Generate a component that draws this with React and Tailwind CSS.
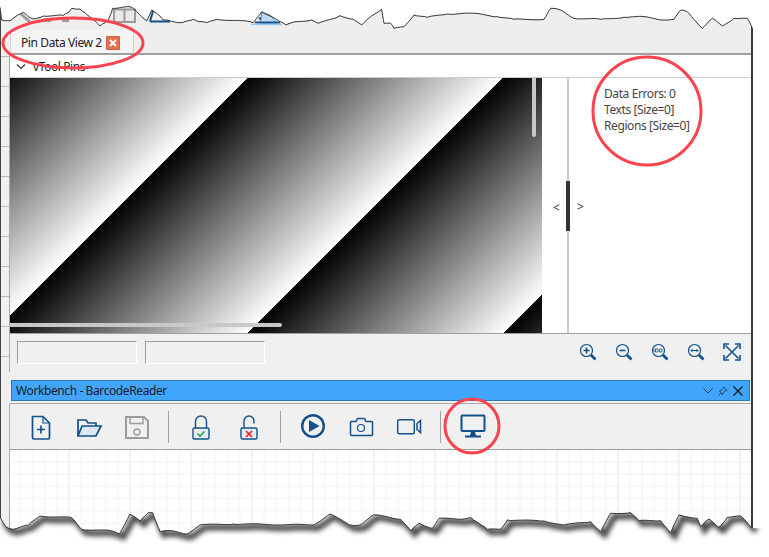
import React from 'react'

const BLUE = '#11508a'

// torn paper edges, traced from the 3x crops
const scale = (pts, dx, dy) => pts.map(([x, y]) => [x / 3 + dx, y / 3 + dy])

const TOP_EDGE = [
  ...scale([[0, 22], [5, 60], [30, 62], [60, 42], [70, 37], [85, 50], [100, 57], [130, 48], [190, 46], [205, 38], [215, 25], [240, 27], [255, 38], [275, 55], [300, 78], [315, 68], [325, 60], [338, 25], [390, 20], [405, 30], [425, 50], [440, 62], [455, 30], [470, 40], [490, 60], [540, 68]], 0, 0),
  ...scale([[20, 63], [40, 58], [55, 65], [80, 68], [110, 58], [185, 62], [220, 68], [245, 35], [275, 50], [300, 65], [318, 75], [345, 65], [395, 60], [415, 70], [465, 55], [480, 47], [520, 58], [545, 75], [575, 48], [605, 28], [612, 70]], 180, 0),
  ...scale([[20, 70], [30, 85], [60, 80], [90, 45], [130, 52], [190, 42], [240, 40], [290, 42], [340, 50], [390, 58], [480, 58], [500, 25], [530, 30], [570, 55], [650, 58], [720, 52], [780, 50], [840, 60], [870, 58], [890, 30], [910, 35], [955, 85], [985, 55], [1015, 78], [1050, 55], [1090, 55], [1105, 85]], 384, 0),
]

const BOTTOM_EDGE = [
  ...scale([[0, 232], [20, 262], [40, 268], [85, 255], [120, 228], [215, 233], [245, 268], [330, 272], [358, 282], [390, 222], [420, 243], [445, 218], [458, 218], [480, 275], [510, 272], [560, 282], [600, 255], [700, 252], [940, 255], [990, 222], [1050, 255], [1080, 255], [1120, 225], [1152, 228]], 0, 440),
  ...scale([[50, 238], [80, 272], [105, 250], [145, 265], [165, 235], [230, 238], [260, 232], [310, 268], [350, 268], [370, 240], [480, 243], [540, 255], [620, 245], [650, 275], [680, 220], [740, 218], [765, 242], [830, 242], [860, 278], [885, 225], [940, 235], [950, 260], [975, 237], [1005, 262], [1030, 232], [1070, 228], [1105, 265]], 384, 440),
]

// little wobble so the edge looks torn, not straight segments
const roughen = (pts) => {
  const out = []
  pts.forEach(([x, y], i) => {
    if (i === 0) return out.push([x, y])
    const [px, py] = pts[i - 1]
    const steps = Math.max(1, Math.round(Math.hypot(x - px, y - py) / 3))
    for (let s = 1; s <= steps; s++) {
      const t = s / steps
      const n = s === steps ? 0 : Math.sin(out.length * 12.9898) * 0.5
      out.push([px + (x - px) * t, py + (y - py) * t + n])
    }
  })
  return out
}

const toStr = (pts) => pts.map(([x, y]) => `${x.toFixed(1)},${y.toFixed(1)}`).join(' ')

const topPts = roughen(TOP_EDGE)
const bottomPts = roughen(BOTTOM_EDGE)

const TornEdges = () => (
  <svg className="absolute inset-0 pointer-events-none" width="769" height="557">
    <defs>
      <filter id="blur" x="-5%" y="-50%" width="110%" height="200%">
        <feGaussianBlur stdDeviation="2.6" />
      </filter>
      <clipPath id="below">
        <polygon points={`${toStr(bottomPts)} 769,528 769,557 0,557`} />
      </clipPath>
    </defs>
    {/* right hand shadow */}
    <line x1="755" y1="34" x2="755" y2="526" stroke="#000" strokeOpacity="0.7" strokeWidth="6" filter="url(#blur)" />
    {/* top */}
    <polygon points={`0,0 769,0 769,30 ${toStr([...topPts].reverse())}`} fill="#fff" />
    {/* toolbar leftovers poking through the tear */}
    <g fill="none">
      <path d="M21 14l9 8" stroke="#9a9a9a" strokeWidth="3" />
      <path d="M44 21h7M62 21h7M67.500 17v5" stroke="#9a9a9a" strokeWidth="2" />
      <path d="M114 22V9.500h21V22zM124.500 9.500V22" stroke="#9a9a9a" strokeWidth="2" fill="#e8e8e8" />
      <path d="M150 21.500h20M150 21.500L153 11" stroke={BLUE} strokeWidth="2" />
      <path d="M260 23l2-11 8 3 7 8z" fill="#bcd7ee" stroke={BLUE} strokeWidth="0.6" />
      <circle cx="260" cy="18.500" r="1.300" fill={BLUE} />
      <path d="M255 22.500h25" stroke={BLUE} strokeWidth="2" />
      <path d="M251 24.500h31" stroke="#9cc8ee" strokeWidth="1.500" />
    </g>
    <polyline points={toStr(topPts)} fill="none" stroke="#333" strokeWidth="1" />
    {/* bottom */}
    <polygon points={`${toStr(bottomPts)} 769,528 769,557 0,557`} fill="#fff" />
    <g clipPath="url(#below)">
      <polyline points={toStr(bottomPts)} transform="translate(4 3)" fill="none" stroke="#000" strokeOpacity="0.75" strokeWidth="6" filter="url(#blur)" />
    </g>
    <polyline points={toStr(bottomPts)} fill="none" stroke="#333" strokeWidth="1" />
    {/* red callouts */}
    <g fill="none" stroke="#f9434f" strokeWidth="3">
      <ellipse cx="73" cy="43" rx="70" ry="25" />
      <circle cx="647" cy="111" r="54" />
      <circle cx="472" cy="426" r="27" />
    </g>
  </svg>
)

const Ruler = () => (
  <div className="w-[10px] shrink-0 flex flex-col border-l border-[#444] bg-[#f0f0f0] pt-[56px]">
    <div className="h-[316px] border-r border-[#a8a8a8] flex flex-col gap-[29px]">
      {[...Array(11)].map((_, i) => (
        <div key={i} className="h-px bg-[#b8b8b8] shrink-0" />
      ))}
    </div>
    <div className="h-[32px]" />
    <div className="flex-1 border-r border-[#a8a8a8]" />
  </div>
)

const Zoom = ({ children }) => (
  <svg width="18" height="18" viewBox="0 0 18 18" fill="none" stroke={BLUE}>
    <circle cx="7.500" cy="7.500" r="6" strokeWidth="1.200" />
    <path d="M12 12l4.500 4.500" strokeWidth="2.600" />
    {children}
  </svg>
)

const ZoomBar = () => (
  <div className="flex items-center gap-[18px] pr-[10px] mt-[2px]">
    <Zoom>
      <path d="M4.500 7.500h6M7.500 4.500v6" strokeWidth="1.600" />
    </Zoom>
    <Zoom>
      <path d="M4.500 7.500h6" strokeWidth="1.600" />
    </Zoom>
    <Zoom>
      <path d="M3 6v3M4.500 6h2.500v3H4.500zM8.500 6h2.500v3H8.500z" strokeWidth="0.800" />
    </Zoom>
    <Zoom>
      <path d="M4 7.500h7M5.500 6L4 7.500 5.500 9M9.500 6L11 7.500 9.500 9" strokeWidth="1" />
    </Zoom>
    <svg width="18" height="18" viewBox="0 0 18 18" fill="none" stroke={BLUE} strokeWidth="1.500">
      <path d="M2.500 2.500l13 13M15.500 2.500l-13 13" />
      <path d="M1 6V1h5M12 1h5v5M17 12v5h-5M6 17H1v-5" strokeWidth="1.600" />
    </svg>
  </div>
)

const ToolIcon = ({ children }) => (
  <button className="w-[48px] h-[28px] flex items-center justify-center">
    <svg width="28" height="28" viewBox="0 0 28 28" fill="none" stroke={BLUE} strokeWidth="1.700">
      {children}
    </svg>
  </button>
)

const Sep = () => <div className="w-px h-[32px] ml-[7px] mr-[8px] bg-[#a0a0a0]" />

const Toolbar = () => (
  <div className="h-[46px] flex items-center pl-[7px] border-t border-[#a8a8a8]">
    <ToolIcon>
      <path d="M5.500 3.500h10.500l6.500 6.500v14.500a1.500 1.500 0 0 1-1.500 1.500H7a1.500 1.500 0 0 1-1.500-1.500z" />
      <path d="M16 3.500V10h6.500" strokeWidth="1.200" />
      <path d="M14 12.500v8M10 16.500h8" />
    </ToolIcon>
    <ToolIcon>
      <path d="M3 23V7h8l2 3h8v3" />
      <path d="M3 23l4-10h19l-5 10z" fill="#dbe7f2" />
    </ToolIcon>
    <ToolIcon>
      <g stroke="#9c9c9c" strokeWidth="2">
        <path d="M3 4h18l4 4v17H3z" />
        <path d="M7 4v6.500h13V4" strokeWidth="1.400" />
        <circle cx="14" cy="19" r="3" strokeWidth="1.300" />
      </g>
    </ToolIcon>
    <Sep />
    <ToolIcon>
      <path d="M8.500 15V8.500a5.500 5.500 0 0 1 11 0V15" strokeWidth="1.400" />
      <rect x="6" y="15" width="16" height="11" rx="1.500" fill="#e4edf5" strokeWidth="1.400" />
      <path d="M10.500 20.500l2.500 2.500 4.500-4.500" stroke="#22a04a" strokeWidth="1.600" />
    </ToolIcon>
    <ToolIcon>
      <path d="M9 15V8a5 5 0 0 1 10 0v2.500" strokeWidth="1.400" />
      <rect x="6" y="15" width="16" height="11" rx="1.500" fill="#e4edf5" strokeWidth="1.400" />
      <path d="M11 18l6 6M17 18l-6 6" stroke="#ee1c25" strokeWidth="1.700" />
    </ToolIcon>
    <Sep />
    <ToolIcon>
      <circle cx="14" cy="13" r="10.800" strokeWidth="2.400" />
      <path d="M10 7l10.500 6L10 19z" fill={BLUE} stroke="none" />
    </ToolIcon>
    <ToolIcon>
      <path d="M3.500 8.500h5.500l1.500-3h7l1.500 3h5.500a1 1 0 0 1 1 1v12a1 1 0 0 1-1 1h-20a1 1 0 0 1-1-1v-12a1 1 0 0 1 1-1z" strokeWidth="1.500" />
      <circle cx="14" cy="15" r="3.500" strokeWidth="1.200" />
    </ToolIcon>
    <ToolIcon>
      <rect x="2.700" y="6.700" width="16.600" height="14" rx="1.500" strokeWidth="1.400" />
      <path d="M25.500 7.500l-3.500 3v6l3.500 3z" strokeWidth="1.500" />
    </ToolIcon>
    <Sep />
    <ToolIcon>
      <rect x="2.500" y="2.500" width="23" height="15.500" rx="1" strokeWidth="2" />
      <path d="M12 19h4l1 3.500h5v2H6v-2h5z" fill={BLUE} stroke="none" />
    </ToolIcon>
  </div>
)

const InputBox = () => (
  <div className="w-[120px] h-[23px] border-t border-l border-[#a0a0a0] border-r border-b border-r-white border-b-white" />
)

export default function App() {
  return (
    <div className="relative w-[769px] h-[557px] overflow-hidden bg-white text-[12px] leading-[16px] tracking-[-0.4px] text-[#222] font-['Noto_Sans',sans-serif]">
      <div className="flex h-[540px]">
        <Ruler />
        <div className="w-[743px] flex flex-col border-r-2 border-[#3a3a3a] bg-white">
          {/* tab strip */}
          <div className="h-[55px] shrink-0 flex items-end bg-[#eeeeee] border-b-2 border-[#a0a0a0]">
            <div className="w-[124px] h-[23px] flex items-center gap-[4px] pl-[10px] pt-[2px] bg-[#f4f4f4] border-x border-[#cfcfcf]">
              <span>Pin Data View 2</span>
              <span className="w-[14px] h-[14px] flex items-center justify-center rounded-[1px] bg-[#e4704e] border border-[#d2603e]">
                <svg width="8" height="8" viewBox="0 0 8 8" stroke="#fff" strokeWidth="2">
                  <path d="M1 1l6 6M7 1L1 7" />
                </svg>
              </span>
            </div>
          </div>

          {/* pins header */}
          <div className="h-[23px] shrink-0 flex items-center pl-[6px] pt-[1px] gap-[7px] border-b border-[#cccccc]">
            <svg width="10" height="6" viewBox="0 0 10 6" fill="none" stroke="#333" strokeWidth="1.100">
              <path d="M1 .5l4 4 4-4" />
            </svg>
            <span>vTool Pins</span>
          </div>

          {/* image + results */}
          <div className="h-[255px] shrink-0 flex">
            <div className="relative w-[532px] bg-[repeating-linear-gradient(135deg,#000_-13.4px,#fff_167.6px)]">
              <div className="absolute right-[6px] top-0 w-[4px] h-[59px] rounded-b-sm bg-[#c8c8c8]" />
              <div className="absolute left-0 bottom-[6px] w-[272px] h-[4px] rounded-r-sm bg-[#c8c8c8]" />
            </div>
            <div className="relative flex-1 flex">
              <div className="w-[25px] flex items-center justify-start pl-[11px] pt-[4px] text-[#333]">&lt;</div>
              <div className="w-[2px] bg-[#cccccc]" />
              <div className="flex-1 flex flex-col pl-[35px] pt-[8px] text-[#444]">
                <span>Data Errors: 0</span>
                <span>Texts [Size=0]</span>
                <span>Regions [Size=0]</span>
              </div>
              <div className="absolute left-[24px] top-[103px] w-[4px] h-[50px] bg-[#333]" />
              <div className="absolute left-[35px] top-[121px] text-[#333]">&gt;</div>
            </div>
          </div>

          {/* status + zoom */}
          <div className="h-[47px] shrink-0 flex items-start justify-between pl-[7px] pt-[7px] bg-[#f0f0f0] border-t border-[#a0a0a0]">
            <div className="flex gap-[8px]">
              <InputBox />
              <InputBox />
            </div>
            <ZoomBar />
          </div>

          {/* workbench */}
          <div className="shrink-0 bg-[#f0f0f0] pb-[2px]">
            <div className="h-[21px] mx-px flex items-center justify-between pl-[4px] pr-[6px] bg-[#42a5fd] border border-[#2a7ab8] text-[#1c1c1c]">
              <span>Workbench - BarcodeReader</span>
              <div className="flex items-center gap-[5px]">
                <svg width="10" height="6" viewBox="0 0 10 6" fill="none" stroke="#1c3a55" strokeWidth="1">
                  <path d="M.5.500l4.500 4.500 4.500-4.500" />
                </svg>
                <svg width="10" height="10" viewBox="0 0 10 10" fill="none" stroke="#1c3a55" strokeWidth="0.900">
                  <path d="M5.500 1l3.500 3.500-2 .5-2 2-.5 1.500L1.500 5 3 4.500l2-2zM3 7L.5 9.500" />
                </svg>
                <svg width="10" height="10" viewBox="0 0 10 10" fill="none" stroke="#111" strokeWidth="1.100">
                  <path d="M.5.500l9 9M9.500.500l-9 9" />
                </svg>
              </div>
            </div>
          </div>

          <div className="shrink-0 bg-[#f0f0f0] border-b border-[#a0a0a0]">
            <Toolbar />
          </div>

          {/* workbench canvas */}
          <div className="flex-1 bg-white bg-[linear-gradient(to_right,#f3f3f3_2px,transparent_2px),linear-gradient(to_right,#f8f8f8_2px,transparent_2px),linear-gradient(to_bottom,#f8f8f8_2px,transparent_2px)] bg-[size:61px_61px,12.2px_12.2px,12.2px_12.2px] bg-[position:-3px_0,9.500px_0,0_11px]" />
        </div>
      </div>
      <TornEdges />
    </div>
  )
}
